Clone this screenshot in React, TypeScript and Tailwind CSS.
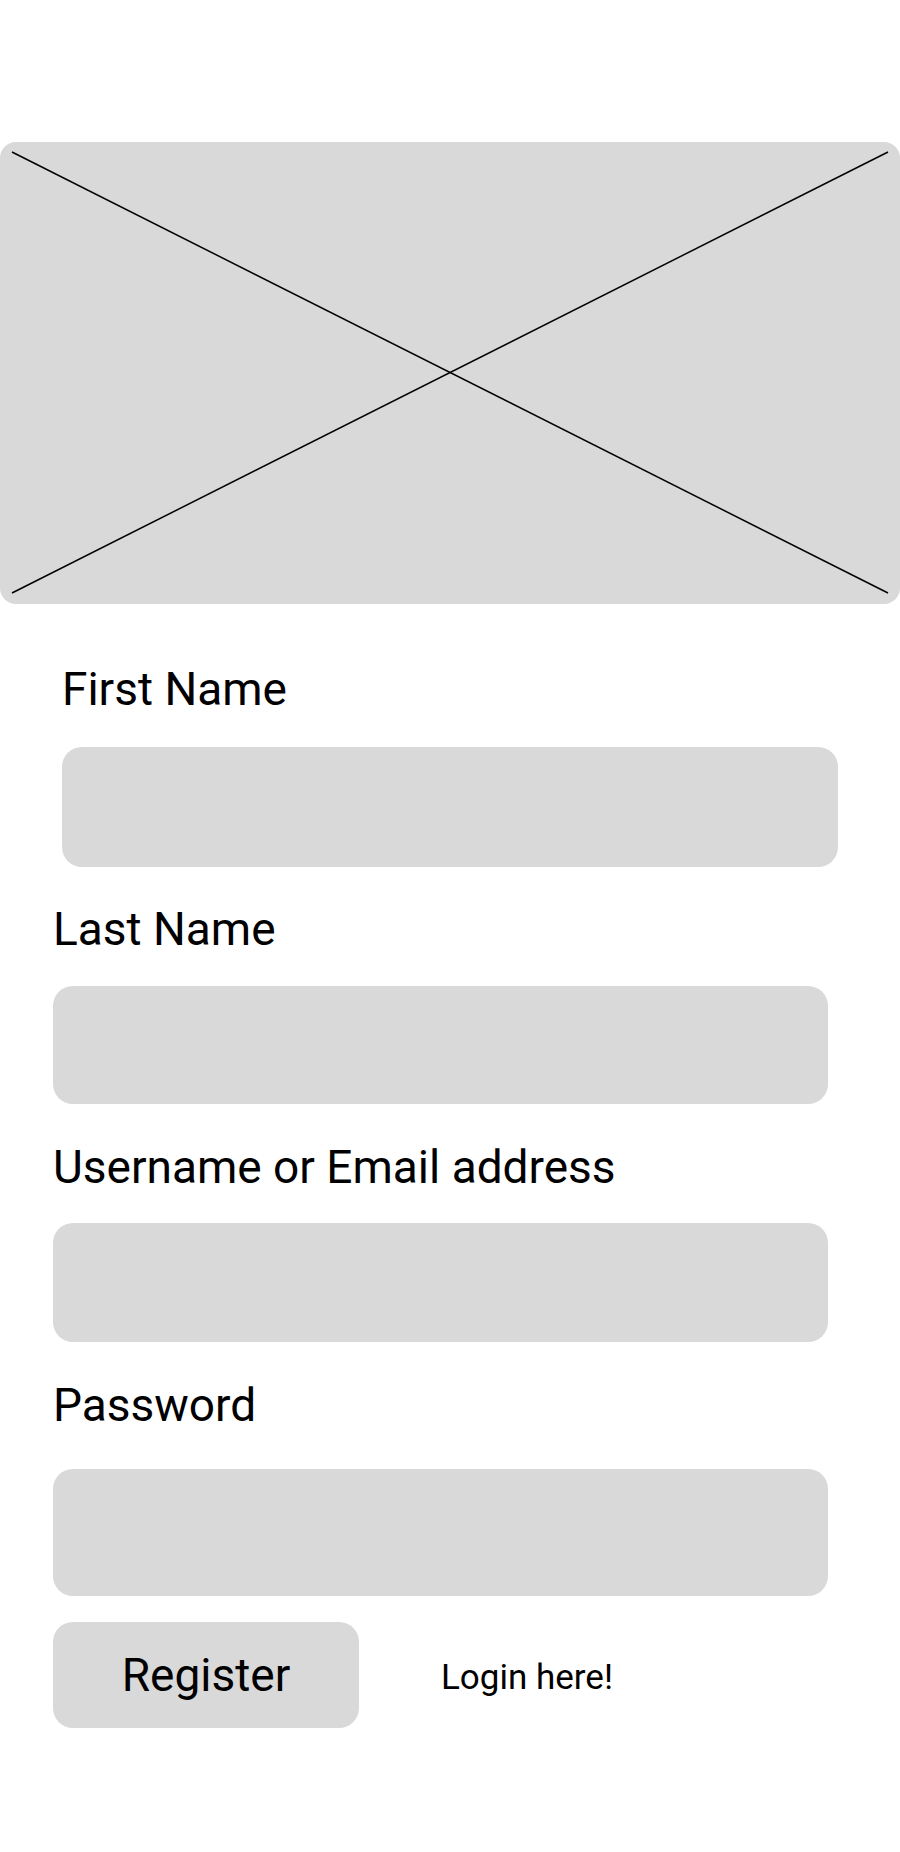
import React from "react";

function Label({ children, className = "" }: { children: React.ReactNode; className?: string }) {
  return (
    <div className={`h-[46px] text-[46px] leading-[46px] text-black whitespace-nowrap ${className}`}>
      {children}
    </div>
  );
}

function Field({ className = "" }: { className?: string }) {
  return <div className={`bg-[#d9d9d9] rounded-[20px] ${className}`} />;
}

export default function App() {
  return (
    <div
      className="w-[900px] min-h-[1852px] bg-white pt-[142px]"
      style={{ fontFamily: "Roboto, 'Liberation Sans', sans-serif" }}
    >
      <div className="relative h-[462px] w-[900px] rounded-[16px] bg-[#d9d9d9] overflow-hidden">
        <svg className="absolute inset-0" width="900" height="462" viewBox="0 0 900 462">
          <line x1="12" y1="10" x2="888" y2="451" stroke="#000" strokeWidth="1.5" />
          <line x1="12" y1="451" x2="888" y2="10" stroke="#000" strokeWidth="1.5" />
        </svg>
      </div>

      <div className="pl-[62px]">
        <Label className="mt-[62px]">First Name</Label>
        <Field className="mt-[35px] w-[776px] h-[120px]" />
      </div>

      <div className="pl-[53px]">
        <Label className="mt-[39px]">Last Name</Label>
        <Field className="mt-[34px] w-[775px] h-[118px]" />

        <Label className="mt-[40px]">Username or Email address</Label>
        <Field className="mt-[33px] w-[775px] h-[119px]" />

        <Label className="mt-[40px]">Password</Label>
        <Field className="mt-[41px] w-[775px] h-[127px]" />

        <div className="mt-[26px] flex items-center">
          <button className="w-[306px] h-[106px] rounded-[20px] bg-[#d9d9d9] flex items-center justify-center">
            <span className="text-[46px] leading-[46px] text-black">Register</span>
          </button>
          <span className="ml-[82px] text-[35px] leading-[35px] text-black translate-y-[2px]">
            Login here!
          </span>
        </div>
      </div>
    </div>
  );
}
